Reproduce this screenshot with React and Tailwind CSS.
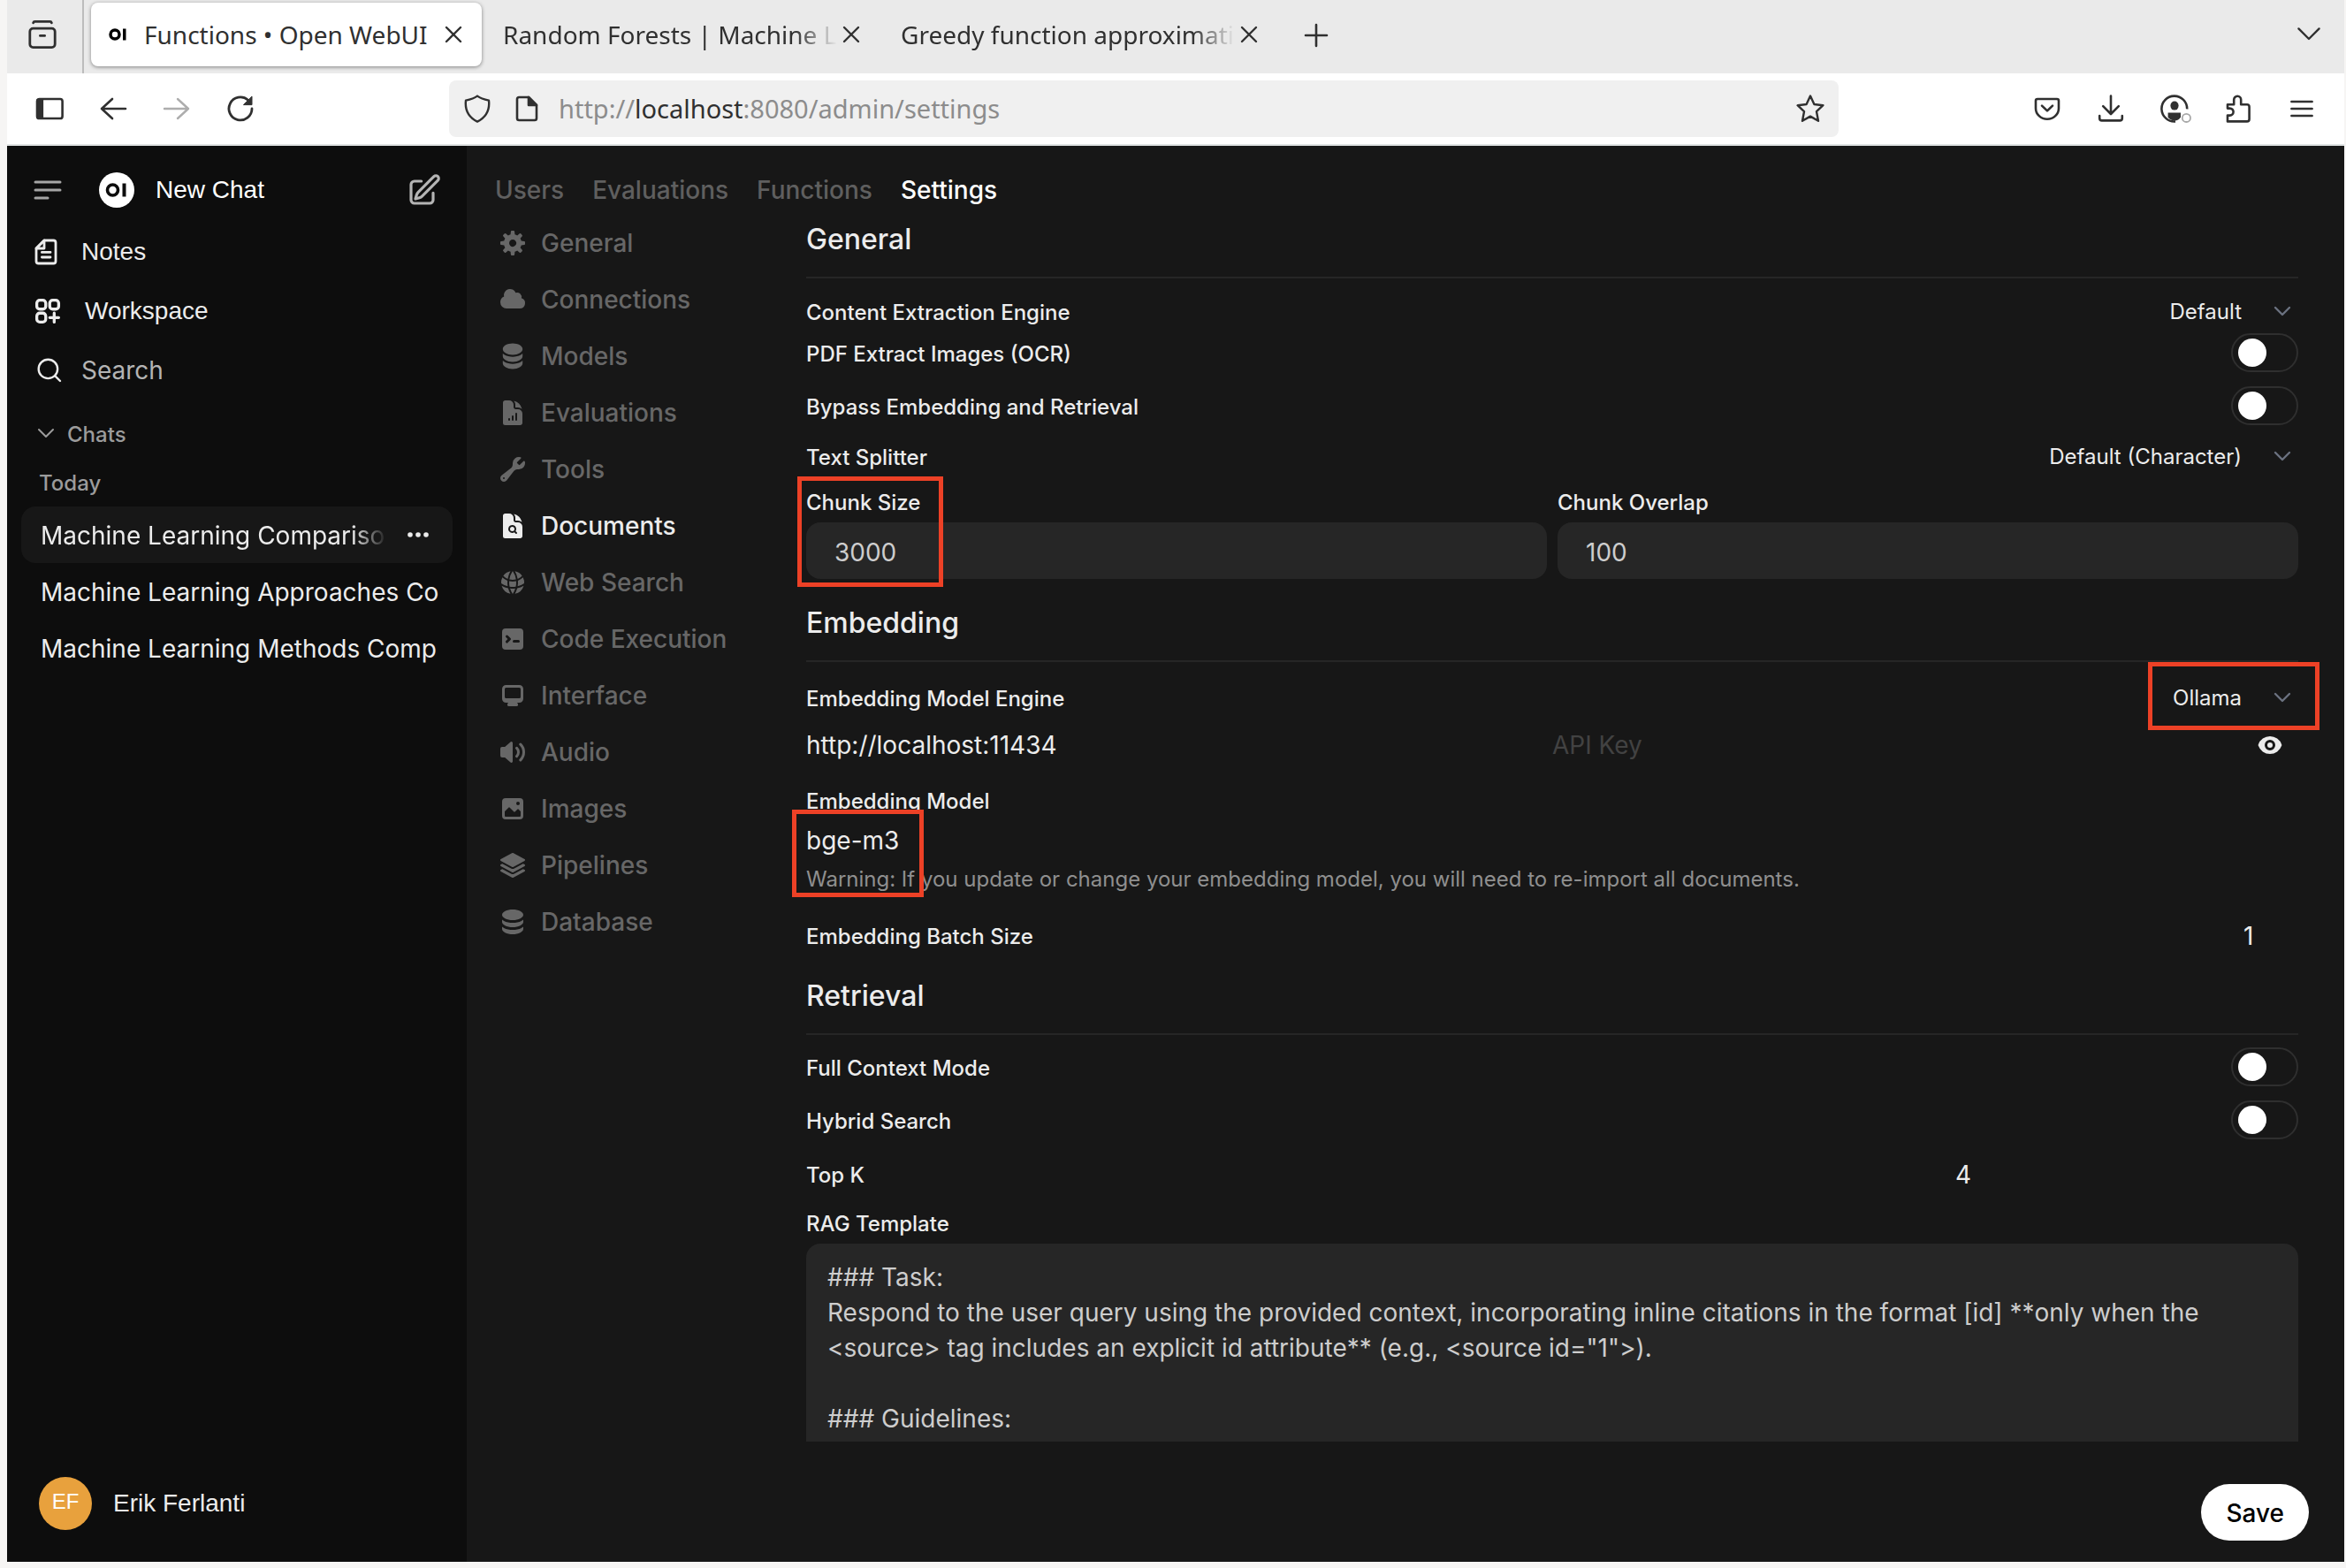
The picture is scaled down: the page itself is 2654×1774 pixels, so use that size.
import React from "react";
import {
  HiDocumentChartBar,
  HiDocumentMagnifyingGlass,
  HiGlobeAlt,
} from "react-icons/hi2";

const Svg = ({ vb = 16, className = "size-8", children, ...rest }) => (
  <svg viewBox={`0 0 ${vb} ${vb}`} className={className} fill="currentColor" aria-hidden="true" {...rest}>
    {children}
  </svg>
);

const Line = ({ className = "size-8", vb = 16, w = 1.2, children }) => (
  <svg
    viewBox={`0 0 ${vb} ${vb}`}
    className={className}
    fill="none"
    stroke="currentColor"
    strokeWidth={w}
    strokeLinecap="round"
    strokeLinejoin="round"
    aria-hidden="true"
  >
    {children}
  </svg>
);

const solid = (d) => (
  <Svg>
    <path fillRule="evenodd" clipRule="evenodd" d={d} />
  </Svg>
);

const MENU = [
  ["General", solid("M6.955 1.45A.5.5 0 0 1 7.452 1h1.096a.5.5 0 0 1 .497.45l.17 1.699c.484.12.94.312 1.356.562l1.321-1.081a.5.5 0 0 1 .67.033l.774.775a.5.5 0 0 1 .034.67l-1.08 1.32c.25.417.44.873.561 1.357l1.699.17a.5.5 0 0 1 .45.497v1.096a.5.5 0 0 1-.45.497l-1.699.17c-.12.484-.312.94-.562 1.356l1.082 1.322a.5.5 0 0 1-.034.67l-.774.774a.5.5 0 0 1-.67.033l-1.322-1.08c-.416.25-.872.44-1.356.561l-.17 1.699a.5.5 0 0 1-.497.45H7.452a.5.5 0 0 1-.497-.45l-.17-1.699a4.973 4.973 0 0 1-1.356-.562L4.108 13.37a.5.5 0 0 1-.67-.033l-.774-.775a.5.5 0 0 1-.034-.67l1.08-1.32a4.971 4.971 0 0 1-.561-1.357l-1.699-.17A.5.5 0 0 1 1 8.548V7.452a.5.5 0 0 1 .45-.497l1.699-.17c.12-.484.312-.94.562-1.356L2.629 4.107a.5.5 0 0 1 .034-.67l.774-.774a.5.5 0 0 1 .67-.033L5.43 3.71a4.97 4.97 0 0 1 1.356-.561l.17-1.699ZM6 8c0 .538.212 1.026.558 1.385l.057.057a2 2 0 0 0 2.828-2.828l-.058-.056A2 2 0 0 0 6 8Z")],
  ["Connections", solid("M1 9.5A3.5 3.5 0 0 0 4.5 13H12a3 3 0 0 0 .917-5.857 2.503 2.503 0 0 0-3.198-3.019 3.5 3.5 0 0 0-6.628 2.171A3.5 3.5 0 0 0 1 9.5Z")],
  ["Models", (
    <Svg vb={20}>
      <path d="M10 1c3.866 0 7 1.79 7 4s-3.134 4-7 4-7-1.79-7-4 3.134-4 7-4zm5.694 8.13c.464-.264.91-.583 1.306-.952V10c0 2.21-3.134 4-7 4s-7-1.79-7-4V8.178c.396.37.842.688 1.306.953C5.838 10.006 7.854 10.5 10 10.5s4.162-.494 5.694-1.37zM3 13.179V15c0 2.21 3.134 4 7 4s7-1.79 7-4v-1.822c-.396.37-.842.688-1.306.953-1.532.875-3.548 1.369-5.694 1.369s-4.162-.494-5.694-1.37A7.009 7.009 0 013 13.179z" />
    </Svg>
  )],
  ["Evaluations", <HiDocumentChartBar className="size-8" />],
  ["Tools", solid("M11.5 8a3.5 3.5 0 0 0 3.362-4.476c-.094-.325-.497-.39-.737-.15L12.099 5.4a.48.48 0 0 1-.653.033 8.554 8.554 0 0 1-.879-.879.48.48 0 0 1 .033-.653l2.027-2.028c.24-.24.175-.642-.15-.736a3.502 3.502 0 0 0-4.476 3.427c.018.99-.133 2.093-.914 2.7l-5.31 4.13a2.015 2.015 0 1 0 2.828 2.827l4.13-5.309c.607-.78 1.71-.932 2.7-.914L11.5 8ZM3 13.5a.5.5 0 1 0 0-1 .5.5 0 0 0 0 1Z")],
  ["Documents", <HiDocumentMagnifyingGlass className="size-8" />],
  ["Web Search", <HiGlobeAlt className="size-8" />],
  ["Code Execution", solid("M2 4a2 2 0 0 1 2-2h8a2 2 0 0 1 2 2v8a2 2 0 0 1-2 2H4a2 2 0 0 1-2-2V4Zm2.22 1.97a.75.75 0 0 0 0 1.06l.97.97-.97.97a.75.75 0 1 0 1.06 1.06l1.5-1.5a.75.75 0 0 0 0-1.06l-1.5-1.5a.75.75 0 0 0-1.06 0ZM8.75 8.5a.75.75 0 0 0 0 1.5h2.5a.75.75 0 0 0 0-1.5h-2.5Z")],
  ["Interface", solid("M2 4.25A2.25 2.25 0 0 1 4.25 2h7.5A2.25 2.25 0 0 1 14 4.25v5.5A2.25 2.25 0 0 1 11.75 12h-1.312c.1.128.21.248.328.36a.75.75 0 0 1 .234.545v.345a.75.75 0 0 1-.75.75h-4.5a.75.75 0 0 1-.75-.75v-.345a.75.75 0 0 1 .234-.545c.118-.111.228-.232.328-.36H4.25A2.25 2.25 0 0 1 2 9.75v-5.5Zm2.25-.75a.75.75 0 0 0-.75.75v4.5c0 .414.336.75.75.75h7.5a.75.75 0 0 0 .75-.75v-4.5a.75.75 0 0 0-.75-.75h-7.5Z")],
  ["Audio", solid("M7.557 2.066A.75.75 0 0 1 8 2.75v10.5a.75.75 0 0 1-1.248.56L3.59 11H2a1 1 0 0 1-1-1V6a1 1 0 0 1 1-1h1.59l3.162-2.81a.75.75 0 0 1 .805-.124ZM12.95 3.05a.75.75 0 1 0-1.06 1.06 5.5 5.5 0 0 1 0 7.78.75.75 0 1 0 1.06 1.06 7 7 0 0 0 0-9.9ZM10.828 5.172a.75.75 0 1 0-1.06 1.06 2.5 2.5 0 0 1 0 3.536.75.75 0 1 0 1.06 1.06 4 4 0 0 0 0-5.656Z")],
  ["Images", solid("M2 4a2 2 0 0 1 2-2h8a2 2 0 0 1 2 2v8a2 2 0 0 1-2 2H4a2 2 0 0 1-2-2V4Zm10.5 5.707a.5.5 0 0 0-.146-.353l-1-1a.5.5 0 0 0-.708 0L9.354 9.646a.5.5 0 0 1-.708 0L6.354 7.354a.5.5 0 0 0-.708 0l-2 2a.5.5 0 0 0-.146.353V12a.5.5 0 0 0 .5.5h8a.5.5 0 0 0 .5-.5V9.707ZM12 5a1 1 0 1 1-2 0 1 1 0 0 1 2 0Z")],
  ["Pipelines", (
    <Svg vb={24}>
      <path d="M11.644 1.59a.75.75 0 0 1 .712 0l9.75 5.25a.75.75 0 0 1 0 1.32l-9.75 5.25a.75.75 0 0 1-.712 0l-9.75-5.25a.75.75 0 0 1 0-1.32l9.75-5.25Z" />
      <path d="m3.265 10.602 7.668 4.129a2.25 2.25 0 0 0 2.134 0l7.668-4.13 1.37.739a.75.75 0 0 1 0 1.32l-9.75 5.25a.75.75 0 0 1-.71 0l-9.75-5.25a.75.75 0 0 1 0-1.32l1.37-.738Z" />
      <path d="m10.933 19.231-7.668-4.13-1.37.739a.75.75 0 0 0 0 1.32l9.75 5.25c.221.12.489.12.71 0l9.75-5.25a.75.75 0 0 0 0-1.32l-1.37-.738-7.668 4.13a2.25 2.25 0 0 1-2.134-.001Z" />
    </Svg>
  )],
  ["Database", solid("M8 7c3.314 0 6-1.343 6-3s-2.686-3-6-3-6 1.343-6 3 2.686 3 6 3ZM8 8.5c1.84 0 3.579-.37 4.914-1.037A6.33 6.33 0 0 0 14 6.78V8c0 1.657-2.686 3-6 3S2 9.657 2 8V6.78c.346.273.72.5 1.087.683C4.42 8.131 6.16 8.5 8 8.5ZM8 12.5c1.84 0 3.579-.37 4.914-1.037.366-.183.74-.41 1.086-.684V12c0 1.657-2.686 3-6 3s-6-1.343-6-3v-1.22c.346.273.72.5 1.087.683C4.42 12.131 6.16 12.5 8 12.5Z")],
];

const TABS = [
  { title: "Functions • Open WebUI", active: true },
  { title: "Random Forests | Machine Le" },
  { title: "Greedy function approximati" },
];

const TEMPLATE = `### Task:
Respond to the user query using the provided context, incorporating inline citations in the format [id] **only when the <source> tag includes an explicit id attribute** (e.g., <source id="1">).

### Guidelines:`;

function TabStrip() {
  return (
    <div className="flex h-[83px] shrink-0 items-start bg-[#eaeaea] pr-6 pl-4 text-[28px] text-[#303030]">
      <div className="flex h-full w-[71px] shrink-0 items-start border-r-2 border-[#bcbcbc] pt-[23px] pl-2">
        <button aria-label="Firefox View">
          <Line w={1.4}>
            <path d="M2.8 1.4Q3 .7 3.7.7h8.600q.7 0 .9.700" />
            <rect x=".9" y="4.600" width="14.200" height="10.700" rx="1.800" />
            <path d="M6.700 8.700h2.600" />
          </Line>
        </button>
      </div>
      <div className="ml-2 flex gap-2 pt-[3px]">
        {TABS.map((t) => (
          <div
            key={t.title}
            className={
              t.active
                ? "flex h-[72px] w-[442px] items-center rounded-lg bg-white px-4 shadow-[0_1px_4px_rgba(0,0,0,0.45)]"
                : "flex h-[72px] w-[442px] items-center px-4"
            }
          >
            {t.active && (
              <Svg vb={32} className="mr-3 size-8 shrink-0 text-black">
                <circle cx="11" cy="16" r="5" fill="none" stroke="currentColor" strokeWidth="3.500" />
                <rect x="20" y="9.500" width="3.500" height="13" />
              </Svg>
            )}
            <button
              className={
                t.active
                  ? "min-w-0 flex-1 text-left whitespace-nowrap"
                  : "min-w-0 flex-1 text-left whitespace-nowrap [mask-image:linear-gradient(to_right,black_calc(100%-48px),transparent)]"
              }
            >
              {t.title}
            </button>
            <button aria-label="Close tab" className="shrink-0">
              <Line w={1.2}>
                <path d="M4 4l8 8M12 4l-8 8" />
              </Line>
            </button>
          </div>
        ))}
      </div>
      <button aria-label="New tab" className="mt-[24px] ml-7">
        <Line w={1.3}>
          <path d="M8 2v12M2 8h12" />
        </Line>
      </button>
      <button aria-label="List all tabs" className="mt-[22px] ml-auto">
        <Line w={1.2}>
          <path d="M2.200 5.200L8 11l5.800-5.800" />
        </Line>
      </button>
    </div>
  );
}

function Toolbar() {
  return (
    <div className="flex h-[82px] shrink-0 items-center border-b-2 border-[#dfe3e3] bg-white pr-8 pl-8 text-[#303030]">
      <div className="flex gap-10">
        <button aria-label="Sidebar">
          <Line w={1.3}>
            <rect x="1" y="2.500" width="14.300" height="11" rx="1.300" />
            <path d="M1.300 3h2.600v10H1.300z" fill="currentColor" />
          </Line>
        </button>
        <button aria-label="Back">
          <Line w={1.300}>
            <path d="M15 8H1.500M7.500 2.500L1.500 8l6 5.500" />
          </Line>
        </button>
        <button aria-label="Forward" className="text-[#adadad]">
          <Line w={1.200}>
            <path d="M1 8h13.500M8.500 2.500l6 5.500-6 5.500" />
          </Line>
        </button>
        <button aria-label="Reload">
          <Line w={1.400}>
            <path d="M14.500 8a6.500 6.500 0 1 1-2.300-5" />
            <path d="M14.500 1.200v4.600h-4.600z" fill="currentColor" strokeWidth=".5" />
          </Line>
        </button>
      </div>
      <div className="mx-[220px] flex h-16 min-w-0 flex-1 items-center rounded-lg bg-[#f0f0f0] px-4">
        <Line w={1.200}>
          <path d="M8 .8c2 1.500 4 2 6.500 2.500.6 5.200-1 9.200-6.500 12-5.500-2.800-7.100-6.800-6.500-12C4 2.800 6 2.300 8 .8z" />
        </Line>
        <Line className="ml-6 size-8" w={1.300}>
          <path d="M9 1.500H3.600Q2.500 1.500 2.500 2.600v10.800q0 1.100 1.100 1.100h8.800q1.100 0 1.100-1.100V6z" />
          <path d="M9 1.500V6h4.500z" fill="currentColor" />
        </Line>
        <div className="ml-5 min-w-0 flex-1 truncate text-[29px] text-[#8c8c8c]">
          http://<span className="text-[#303030]">localhost</span>:8080/admin/settings
        </div>
        <button aria-label="Bookmark">
          <Line w={1.200}>
            <path d="M8 .8l2.200 4.700 5 .6-3.700 3.500 1 5.300L8 12.300l-4.500 2.600 1-5.300L.8 6.100l5-.6z" />
          </Line>
        </button>
      </div>
      <div className="flex gap-10">
        <button aria-label="Pocket">
          <Line w={1.300}>
            <path d="M2.500 2.500h11q1 0 1 1v4.200a6.500 6.200 0 0 1-13 0V3.500q0-1 1-1z" />
            <path d="M5 6.300l3 2.900 3-2.900" />
          </Line>
        </button>
        <button aria-label="Downloads">
          <Line w={1.300}>
            <path d="M8 .8v10M3.600 6.600L8 11l4.400-4.400M1.600 12v1.400q0 1.300 1.300 1.300h10.200q1.300 0 1.300-1.300V12" />
          </Line>
        </button>
        <button aria-label="Account">
          <svg viewBox="0 0 18 16" className="h-8 w-9" fill="none" stroke="currentColor" aria-hidden="true">
            <path d="M8.500 15.200a7.200 7.200 0 1 1 6.600-7" strokeWidth="1.300" />
            <ellipse cx="8" cy="6.300" rx="2.300" ry="2.500" fill="currentColor" stroke="none" />
            <path d="M4.300 10.200h7.200v2.500q-1.200 2-3.400 2-2.800-.2-3.800-2z" fill="currentColor" stroke="none" />
            <circle cx="14.700" cy="13.200" r="2.300" stroke="#a8a8a8" strokeWidth=".9" />
          </svg>
        </button>
        <button aria-label="Extensions" className="-ml-1">
          <Line w={1.300}>
            <path d="M2 5.600h3.600V2.900a2 2 0 0 1 4 0v2.700H13q1.300 0 1.300 1.300v7q0 1.300-1.300 1.300H2v-3.400h1.300a2 2 0 0 0 0-4H2z" />
          </Line>
        </button>
        <button aria-label="Application menu">
          <Line w={1.300}>
            <path d="M2.200 4h11.600M2.200 8h11.600M2.200 12h11.600" />
          </Line>
        </button>
      </div>
    </div>
  );
}

function Sidebar() {
  return (
    <aside className="flex w-[520px] shrink-0 flex-col bg-[#0d0d0d] px-4 pt-[18px] pb-9 text-[#ececec]">
      <div className="flex h-16 items-center pl-2.5">
        <button aria-label="Toggle sidebar" className="text-[#a5a5a5]">
          <Line className="size-10" vb={20} w={1.500}>
            <path d="M3 5.500h14M3 10h14M3 14.500h7" />
          </Line>
        </button>
        <a href="#new" className="ml-[38px] flex flex-1 items-center gap-6 text-white">
          <Svg vb={40} className="size-10">
            <circle cx="20" cy="20" r="20" />
            <circle cx="15.500" cy="20" r="6" fill="none" stroke="#0d0d0d" strokeWidth="3.600" />
            <rect x="26.500" y="12.500" width="4" height="15" fill="#0d0d0d" />
          </Svg>
          <span className="font-['Liberation_Sans',sans-serif] text-[28px] font-medium">New Chat</span>
        </a>
        <button aria-label="Edit" className="mr-3 text-[#b4b4b4]">
          <Line className="size-10" vb={24} w={1.900}>
            <path d="m16.862 4.487 1.687-1.688a1.875 1.875 0 1 1 2.652 2.652L10.582 16.070a4.500 4.500 0 0 1-1.897 1.130L6 18l.8-2.685a4.500 4.500 0 0 1 1.130-1.897l8.932-8.931Z" />
            <path d="M18 14v4.750A2.250 2.250 0 0 1 15.750 21H5.250A2.250 2.250 0 0 1 3 18.750V8.250A2.250 2.250 0 0 1 5.250 6H10" />
          </Line>
        </button>
      </div>
      <nav className="mt-1 flex flex-col font-['Liberation_Sans',sans-serif] text-[28px]">
        <a href="#notes" className="flex h-[67px] items-center gap-6 pl-3">
          <Line w={1.400}>
            <path d="M7 1.500h5.200q1.300 0 1.300 1.300v10.400q0 1.300-1.300 1.300H3.800q-1.300 0-1.300-1.300V6z" />
            <path d="M7 1.500V6H2.500zM5.700 8.200h4.800M5.700 11h4.800" />
          </Line>
          Notes
        </a>
        <a href="#workspace" className="flex h-[67px] items-center gap-6 pl-3">
          <Line className="size-9" vb={24} w={2.200}>
            <path d="M13.500 16.875h3.375m0 0h3.375m-3.375 0V13.500m0 3.375v3.375M6 10.500h2.250a2.250 2.250 0 0 0 2.250-2.250V6a2.250 2.250 0 0 0-2.250-2.250H6A2.250 2.250 0 0 0 3.750 6v2.250A2.250 2.250 0 0 0 6 10.500Zm0 9.750h2.250A2.250 2.250 0 0 0 10.500 18v-2.250a2.250 2.250 0 0 0-2.250-2.250H6a2.250 2.250 0 0 0-2.250 2.250V18A2.250 2.250 0 0 0 6 20.250Zm9.750-9.750H18a2.250 2.250 0 0 0 2.250-2.250V6A2.250 2.250 0 0 0 18 3.750h-2.250A2.250 2.250 0 0 0 13.500 6v2.250a2.250 2.250 0 0 0 2.250 2.250Z" />
          </Line>
          Workspace
        </a>
      </nav>
      <label className="flex h-[67px] items-center gap-5 pl-4">
        <Line vb={20} w={1.500}>
          <circle cx="9" cy="9" r="6.700" />
          <path d="M13.800 13.800l3.700 3.700" />
        </Line>
        <input
          aria-label="Search"
          placeholder="Search"
          className="min-w-0 flex-1 bg-transparent text-[28px] outline-none placeholder:text-[#b4b4b4]"
        />
      </label>
      <button className="mt-4 flex h-12 items-center gap-3 pl-4 text-[24px] font-medium text-[#9b9b9b]">
        <Line vb={24} className="size-6" w={2}>
          <path d="M4 6l8 8 8-8" />
        </Line>
        Chats
      </button>
      <h2 className="mt-[15px] mb-2.5 pl-5 text-[24px] leading-8 font-medium text-[#9b9b9b]">Today</h2>
      <div className="flex h-16 items-center rounded-2xl bg-[#171717] px-[22px]">
        <a
          href="#c1"
          className="w-[392px] pt-0.5 text-[28px] whitespace-nowrap [mask-image:linear-gradient(to_right,black_calc(100%-40px),transparent)]"
        >
          Machine Learning Compariso
        </a>
        <button aria-label="Chat menu" className="ml-auto">
          <Svg>
            <circle cx="3" cy="8" r="1.400" />
            <circle cx="7.500" cy="8" r="1.400" />
            <circle cx="12" cy="8" r="1.400" />
          </Svg>
        </button>
      </div>
      {["Machine Learning Approaches Co", "Machine Learning Methods Comp"].map((t) => (
        <div key={t} className="flex h-16 items-center pl-[22px]">
          <a href="#c" className="w-full pt-0.5 text-[28px] whitespace-nowrap">
            {t}
          </a>
        </div>
      ))}
      <button className="mt-auto flex items-center gap-6 pl-5 font-['Liberation_Sans',sans-serif] text-[28px]">
        <span className="flex size-[60px] items-center justify-center rounded-full bg-[#e8a13d] pb-1 text-[24px] text-white">
          EF
        </span>
        Erik Ferlanti
      </button>
    </aside>
  );
}

const Heading = ({ children, className = "" }) => (
  <div className={className}>
    <h2 className="mb-4 pt-0.5 text-[32px] leading-[52px] font-medium">{children}</h2>
    <hr className="border-t-2 border-[#262626]" />
  </div>
);

const Select = ({ id, value }) => (
  <div className="relative flex items-center">
    <select
      id={id}
      className="appearance-none bg-transparent pt-0.5 pr-16 pl-4 text-right text-[24px] outline-none [text-align-last:right]"
    >
      <option>{value}</option>
    </select>
    <span className="pointer-events-none absolute right-1.5 text-[#6b7280]">
      <Line className="size-6" vb={12} w={1.200}>
        <path d="M2 4l4 4 4-4" />
      </Line>
    </span>
  </div>
);

const Row = ({ id, label, className = "", children }) => (
  <div className={`flex items-center justify-between ${className}`}>
    <label htmlFor={id} className="pt-[3px] text-[24px] leading-8 font-medium">
      {label}
    </label>
    {children}
  </div>
);

const Toggle = ({ id }) => (
  <input
    id={id}
    type="checkbox"
    role="switch"
    className="flex h-11 w-[76px] appearance-none items-center rounded-full border-2 border-[#2f2f2f] pl-1.5 before:size-8 before:rounded-full before:bg-white"
  />
);

const Mark = ({ className }) => (
  <div className={`pointer-events-none absolute border-[5px] border-[#ed4126] ${className}`} />
);

function DocumentSettings() {
  return (
    <form className="min-w-0 flex-1 pr-[52px] text-[#ececec]">
      <Heading>General</Heading>
      <Row id="engine" label="Content Extraction Engine" className="mt-3 h-[50px]">
        <Select id="engine" value="Default" />
      </Row>
      <Row id="ocr" label="PDF Extract Images (OCR)">
        <Toggle id="ocr" />
      </Row>
      <Row id="bypass" label="Bypass Embedding and Retrieval" className="mt-4">
        <Toggle id="bypass" />
      </Row>
      <Row id="splitter" label="Text Splitter" className="mt-4 h-[38px]">
        <Select id="splitter" value="Default (Character)" />
      </Row>
      <div className="mt-[18px] grid grid-cols-2 gap-3">
        {[
          ["size", "Chunk Size", "3000"],
          ["overlap", "Chunk Overlap", "100"],
        ].map(([id, label, value]) => (
          <div key={id} className="relative flex flex-col gap-1.5">
            <label htmlFor={id} className="text-[24px] leading-8 font-medium">
              {label}
            </label>
            <input
              id={id}
              defaultValue={value}
              className="h-16 w-full rounded-2xl bg-[#262626] px-8 pt-[3px] text-[28px] text-[#cdcdcd] outline-none"
            />
            {id === "size" && <Mark className="-top-3.5 -left-2.5 h-[125px] w-[165px]" />}
          </div>
        ))}
      </div>

      <Heading className="mt-[22px]">Embedding</Heading>
      <div className="relative mt-3">
        <Row id="embed" label="Embedding Model Engine" className="h-14">
          <Select id="embed" value="Ollama" />
        </Row>
        <Mark className="-top-3 -right-6 h-[77px] w-[194px]" />
      </div>
      <div className="flex h-[52px] items-center">
        <input
          aria-label="API Base URL"
          defaultValue="http://localhost:11434"
          className="min-w-0 flex-1 bg-transparent text-[28px] outline-none"
        />
        <div className="flex flex-1 items-center">
          <input
            aria-label="API Key"
            placeholder="API Key"
            className="min-w-0 flex-1 bg-transparent text-[28px] outline-none placeholder:text-[#424242]"
          />
          <button type="button" aria-label="Show key" className="mr-4">
            <Svg>
              <path d="M8 9.500a1.500 1.500 0 1 0 0-3 1.500 1.500 0 0 0 0 3Z" />
              <path
                fillRule="evenodd"
                d="M1.380 8.280a.87.87 0 0 1 0-.566 7.003 7.003 0 0 1 13.238.006.87.87 0 0 1 0 .566A7.003 7.003 0 0 1 1.379 8.280ZM11 8a3 3 0 1 1-6 0 3 3 0 0 1 6 0Z"
              />
            </Svg>
          </button>
        </div>
      </div>
      <label htmlFor="model" className="mt-[22px] block text-[24px] leading-8 font-medium">
        Embedding Model
      </label>
      <div className="relative">
        <input id="model" defaultValue="bge-m3" className="block h-14 w-full bg-transparent text-[28px] outline-none" />
        <p className="text-[24px] leading-8 text-[#8f8f8f]">
          Warning: If you update or change your embedding model, you will need to re-import all documents.
        </p>
        <Mark className="-top-[7px] -left-4 h-[99px] w-[149px]" />
      </div>
      <Row id="batch" label="Embedding Batch Size" className="mt-[15px] h-16">
        <input id="batch" defaultValue="1" className="w-16 bg-transparent pt-0.5 pl-0.5 text-[28px] outline-none" />
      </Row>

      <Heading className="mt-[9px]">Retrieval</Heading>
      <Row id="full" label="Full Context Mode" className="mt-[14px]">
        <Toggle id="full" />
      </Row>
      <Row id="hybrid" label="Hybrid Search" className="mt-4">
        <Toggle id="hybrid" />
      </Row>
      <Row id="topk" label="Top K" className="mt-4 h-[46px]">
        <input id="topk" defaultValue="4" className="w-[388px] bg-transparent pt-0.5 text-[28px] outline-none" />
      </Row>
      <label htmlFor="rag" className="mt-[18px] mb-1.5 block text-[24px] leading-8 font-medium">
        RAG Template
      </label>
      <textarea
        id="rag"
        defaultValue={TEMPLATE}
        className="block h-[400px] w-full resize-none rounded-2xl bg-[#262626] px-6 pt-[18px] pb-4 text-[28px] leading-10 text-[#cdcdcd] outline-none"
      />
    </form>
  );
}

export default function App() {
  return (
    <div className="flex h-screen flex-col overflow-hidden bg-[#f6f5f4] pr-0.5 pb-[7px] pl-2">
      <div className="flex shrink-0 flex-col font-['Noto_Sans',sans-serif]">
        <TabStrip />
        <Toolbar />
      </div>
      <div className="flex min-h-0 flex-1 font-['Inter',sans-serif]">
        <Sidebar />
        <main className="flex min-w-0 flex-1 flex-col bg-[#171717] pl-8">
          <nav className="flex h-[78px] shrink-0 items-center gap-8 pt-[22px] text-[28px] font-medium text-[#5f5f5f]">
            <a href="#users">Users</a>
            <a href="#evaluations">Evaluations</a>
            <a href="#functions">Functions</a>
            <a href="#settings" className="text-white">Settings</a>
          </nav>
          <div className="flex min-h-0 flex-1">
            <nav className="flex w-[336px] shrink-0 flex-col pl-1 text-[28px] font-medium text-[#676767]">
              {MENU.map(([label, icon]) => (
                <a
                  key={label}
                  href="#section"
                  className={
                    label === "Documents"
                      ? "flex h-16 items-center gap-4 text-[#ececec]"
                      : "flex h-16 items-center gap-4"
                  }
                >
                  {icon}
                  {label}
                </a>
              ))}
            </nav>
            <div className="flex min-w-0 flex-1 flex-col">
              <div className="flex min-h-0 flex-1 items-start overflow-hidden pl-4">
                <DocumentSettings />
              </div>
              <div className="flex shrink-0 justify-end pt-12 pr-10 pb-6">
                <button className="h-16 rounded-full bg-white px-7 pt-0.5 text-[28px] font-medium text-black">
                  Save
                </button>
              </div>
            </div>
          </div>
        </main>
      </div>
    </div>
  );
}
